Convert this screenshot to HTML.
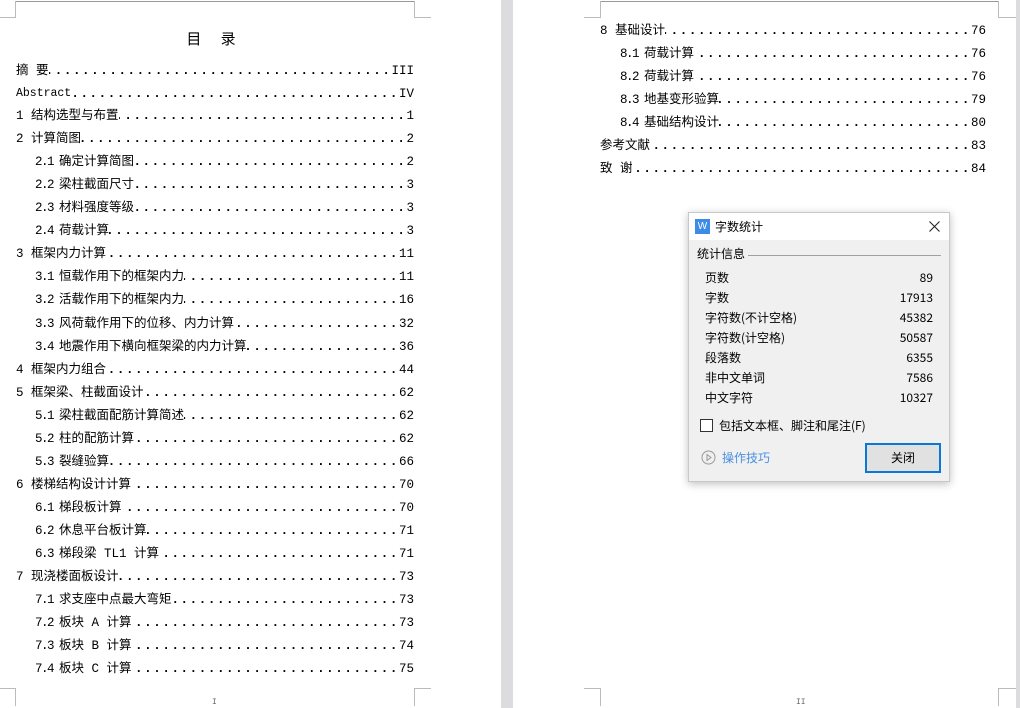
<!DOCTYPE html>
<html><head><meta charset="utf-8"><style>
*{margin:0;padding:0;box-sizing:border-box}
body{width:1020px;height:708px;background:#fff;position:relative;overflow:hidden;font-family:"Liberation Mono","Noto Sans CJK SC",monospace;color:#000}
.gap{position:absolute;left:501px;top:0;width:12px;height:708px;background:#dcdcde}
.gap2{position:absolute;left:1016px;top:0;width:4px;height:708px;background:#dcdcde}
.l{position:absolute;background:#999}
.row{position:absolute;height:16px;display:flex;font-size:12.5px;line-height:16px;white-space:nowrap;font-family:"Liberation Mono","Noto Sans CJK SC",monospace}
.row .t{flex:none}
.row .t b{font-weight:normal;letter-spacing:-1.5px}
.row .d{flex:1;overflow:hidden;letter-spacing:1.6px;font-family:"Liberation Mono",monospace;font-weight:bold;padding-left:2px;direction:rtl;text-align:right}
.row .n{flex:none;font-family:"Liberation Mono",monospace}
.title{position:absolute;left:0;width:430px;text-align:center;top:28px;font-size:15px;font-family:"Noto Sans CJK SC",sans-serif;letter-spacing:8px}
.dlg{position:absolute;left:688px;top:212px;width:262px;height:270px;background:#f0f0f0;border:1px solid #c8c8c8;box-shadow:0 2px 8px rgba(0,0,0,.25);font-family:"Noto Sans CJK SC",sans-serif;font-size:12px}
.tb{height:27px;background:#fff;position:relative}
.ic{position:absolute;left:6px;top:6px;width:15px;height:15px;background:#3c8be6;color:#fff;font-size:10px;line-height:15px;text-align:center;font-family:"Liberation Sans",sans-serif}
.tt{position:absolute;left:26px;top:5px}
.st{position:absolute;left:8px;top:32px}
.hr{position:absolute;left:59px;right:8px;top:42px;height:1px;background:#a0a0a0}
.kv{position:absolute;left:16px;right:16px;display:flex;justify-content:space-between}
</style></head><body>
<div class="gap"></div><div class="gap2"></div>
<div class="l" style="left:15px;top:1px;width:400px;height:1px"></div>
<div class="l" style="left:0;top:17px;width:15px;height:1px;background:#bbb"></div>
<div class="l" style="left:15px;top:1px;width:1px;height:17px;background:#bbb"></div>
<div class="l" style="left:414px;top:1px;width:1px;height:17px;background:#bbb"></div>
<div class="l" style="left:414px;top:17px;width:17px;height:1px;background:#bbb"></div>
<div class="l" style="left:0;top:688px;width:15px;height:1px;background:#bbb"></div>
<div class="l" style="left:15px;top:688px;width:1px;height:18px;background:#bbb"></div>
<div class="l" style="left:414px;top:688px;width:17px;height:1px;background:#bbb"></div>
<div class="l" style="left:414px;top:688px;width:1px;height:18px;background:#bbb"></div>
<div style="position:absolute;left:212px;top:698px;font-size:8px;color:#666">I</div>
<div class="l" style="left:600px;top:1px;width:399px;height:1px"></div>
<div class="l" style="left:584px;top:17px;width:16px;height:1px;background:#bbb"></div>
<div class="l" style="left:600px;top:1px;width:1px;height:17px;background:#bbb"></div>
<div class="l" style="left:998px;top:1px;width:1px;height:17px;background:#bbb"></div>
<div class="l" style="left:998px;top:17px;width:18px;height:1px;background:#bbb"></div>
<div class="l" style="left:584px;top:688px;width:16px;height:1px;background:#bbb"></div>
<div class="l" style="left:600px;top:688px;width:1px;height:18px;background:#bbb"></div>
<div class="l" style="left:998px;top:688px;width:18px;height:1px;background:#bbb"></div>
<div class="l" style="left:998px;top:688px;width:1px;height:18px;background:#bbb"></div>
<div style="position:absolute;left:796px;top:698px;font-size:8px;color:#666">II</div>

<div class="title">目 录</div>

<div class="row" style="left:16px;width:398px;top:63px"><span class="t">摘 要</span><span class="d">..................................................</span><span class="n">III</span></div>
<div class="row" style="left:16px;width:398px;top:86px"><span class="t" style="font-size:11.5px">Abstract</span><span class="d">..................................................</span><span class="n">IV</span></div>
<div class="row" style="left:16px;width:398px;top:108px"><span class="t">1 结构选型与布置</span><span class="d">..................................................</span><span class="n">1</span></div>
<div class="row" style="left:16px;width:398px;top:131px"><span class="t">2 计算简图</span><span class="d">..................................................</span><span class="n">2</span></div>
<div class="row" style="left:35px;width:379px;top:154px"><span class="t"><b>2.1 </b>确定计算简图</span><span class="d">..................................................</span><span class="n">2</span></div>
<div class="row" style="left:35px;width:379px;top:177px"><span class="t"><b>2.2 </b>梁柱截面尺寸</span><span class="d">..................................................</span><span class="n">3</span></div>
<div class="row" style="left:35px;width:379px;top:200px"><span class="t"><b>2.3 </b>材料强度等级</span><span class="d">..................................................</span><span class="n">3</span></div>
<div class="row" style="left:35px;width:379px;top:223px"><span class="t"><b>2.4 </b>荷载计算</span><span class="d">..................................................</span><span class="n">3</span></div>
<div class="row" style="left:16px;width:398px;top:246px"><span class="t">3 框架内力计算</span><span class="d">..................................................</span><span class="n">11</span></div>
<div class="row" style="left:35px;width:379px;top:269px"><span class="t"><b>3.1 </b>恒载作用下的框架内力</span><span class="d">..................................................</span><span class="n">11</span></div>
<div class="row" style="left:35px;width:379px;top:292px"><span class="t"><b>3.2 </b>活载作用下的框架内力</span><span class="d">..................................................</span><span class="n">16</span></div>
<div class="row" style="left:35px;width:379px;top:316px"><span class="t"><b>3.3 </b>风荷载作用下的位移、内力计算</span><span class="d">..................................................</span><span class="n">32</span></div>
<div class="row" style="left:35px;width:379px;top:339px"><span class="t"><b>3.4 </b>地震作用下横向框架梁的内力计算</span><span class="d">..................................................</span><span class="n">36</span></div>
<div class="row" style="left:16px;width:398px;top:362px"><span class="t">4 框架内力组合</span><span class="d">..................................................</span><span class="n">44</span></div>
<div class="row" style="left:16px;width:398px;top:385px"><span class="t">5 框架梁、柱截面设计</span><span class="d">..................................................</span><span class="n">62</span></div>
<div class="row" style="left:35px;width:379px;top:408px"><span class="t"><b>5.1 </b>梁柱截面配筋计算简述</span><span class="d">..................................................</span><span class="n">62</span></div>
<div class="row" style="left:35px;width:379px;top:431px"><span class="t"><b>5.2 </b>柱的配筋计算</span><span class="d">..................................................</span><span class="n">62</span></div>
<div class="row" style="left:35px;width:379px;top:454px"><span class="t"><b>5.3 </b>裂缝验算</span><span class="d">..................................................</span><span class="n">66</span></div>
<div class="row" style="left:16px;width:398px;top:477px"><span class="t">6 楼梯结构设计计算</span><span class="d">..................................................</span><span class="n">70</span></div>
<div class="row" style="left:35px;width:379px;top:500px"><span class="t"><b>6.1 </b>梯段板计算</span><span class="d">..................................................</span><span class="n">70</span></div>
<div class="row" style="left:35px;width:379px;top:523px"><span class="t"><b>6.2 </b>休息平台板计算</span><span class="d">..................................................</span><span class="n">71</span></div>
<div class="row" style="left:35px;width:379px;top:546px"><span class="t"><b>6.3 </b>梯段梁 TL1 计算</span><span class="d">..................................................</span><span class="n">71</span></div>
<div class="row" style="left:16px;width:398px;top:569px"><span class="t">7 现浇楼面板设计</span><span class="d">..................................................</span><span class="n">73</span></div>
<div class="row" style="left:35px;width:379px;top:592px"><span class="t"><b>7.1 </b>求支座中点最大弯矩</span><span class="d">..................................................</span><span class="n">73</span></div>
<div class="row" style="left:35px;width:379px;top:615px"><span class="t"><b>7.2 </b>板块 A 计算</span><span class="d">..................................................</span><span class="n">73</span></div>
<div class="row" style="left:35px;width:379px;top:638px"><span class="t"><b>7.3 </b>板块 B 计算</span><span class="d">..................................................</span><span class="n">74</span></div>
<div class="row" style="left:35px;width:379px;top:661px"><span class="t"><b>7.4 </b>板块 C 计算</span><span class="d">..................................................</span><span class="n">75</span></div>

<div class="row" style="left:600px;width:386px;top:23px"><span class="t">8 基础设计</span><span class="d">..................................................</span><span class="n">76</span></div>
<div class="row" style="left:620px;width:366px;top:46px"><span class="t"><b>8.1 </b>荷载计算</span><span class="d">..................................................</span><span class="n">76</span></div>
<div class="row" style="left:620px;width:366px;top:69px"><span class="t"><b>8.2 </b>荷载计算</span><span class="d">..................................................</span><span class="n">76</span></div>
<div class="row" style="left:620px;width:366px;top:92px"><span class="t"><b>8.3 </b>地基变形验算</span><span class="d">..................................................</span><span class="n">79</span></div>
<div class="row" style="left:620px;width:366px;top:115px"><span class="t"><b>8.4 </b>基础结构设计</span><span class="d">..................................................</span><span class="n">80</span></div>
<div class="row" style="left:600px;width:386px;top:138px"><span class="t">参考文献</span><span class="d">..................................................</span><span class="n">83</span></div>
<div class="row" style="left:600px;width:386px;top:161px"><span class="t">致 谢</span><span class="d">..................................................</span><span class="n">84</span></div>

<div class="dlg">
<div class="tb"><div class="ic">W</div><div class="tt">字数统计</div>
<svg style="position:absolute;left:240px;top:8px" width="11" height="11" viewBox="0 0 11 11"><path d="M0.5 0.5L10.5 10.5M10.5 0.5L0.5 10.5" stroke="#222" stroke-width="1.1"/></svg></div>
<div class="st">统计信息</div><div class="hr"></div>
<div class="kv" style="top:56px"><span>页数</span><span>89</span></div>
<div class="kv" style="top:76px"><span>字数</span><span>17913</span></div>
<div class="kv" style="top:96px"><span>字符数(不计空格)</span><span>45382</span></div>
<div class="kv" style="top:116px"><span>字符数(计空格)</span><span>50587</span></div>
<div class="kv" style="top:136px"><span>段落数</span><span>6355</span></div>
<div class="kv" style="top:156px"><span>非中文单词</span><span>7586</span></div>
<div class="kv" style="top:176px"><span>中文字符</span><span>10327</span></div>
<div style="position:absolute;left:11px;top:206px;width:13px;height:13px;border:1px solid #333;background:#fff"></div>
<div style="position:absolute;left:30px;top:204px">包括文本框、脚注和尾注(F)</div>
<svg style="position:absolute;left:12px;top:237px" width="15" height="15" viewBox="0 0 15 15"><circle cx="7.5" cy="7.5" r="6.5" fill="none" stroke="#999"/><path d="M6 4.5L10 7.5L6 10.5Z" fill="none" stroke="#999"/></svg>
<div style="position:absolute;left:33px;top:236px;color:#4a90e2">操作技巧</div>
<div style="position:absolute;left:176px;top:230px;width:76px;height:30px;border:2px solid #0a78d7;background:#e1e1e1;text-align:center;line-height:26px">关闭</div>
</div>
</body></html>
